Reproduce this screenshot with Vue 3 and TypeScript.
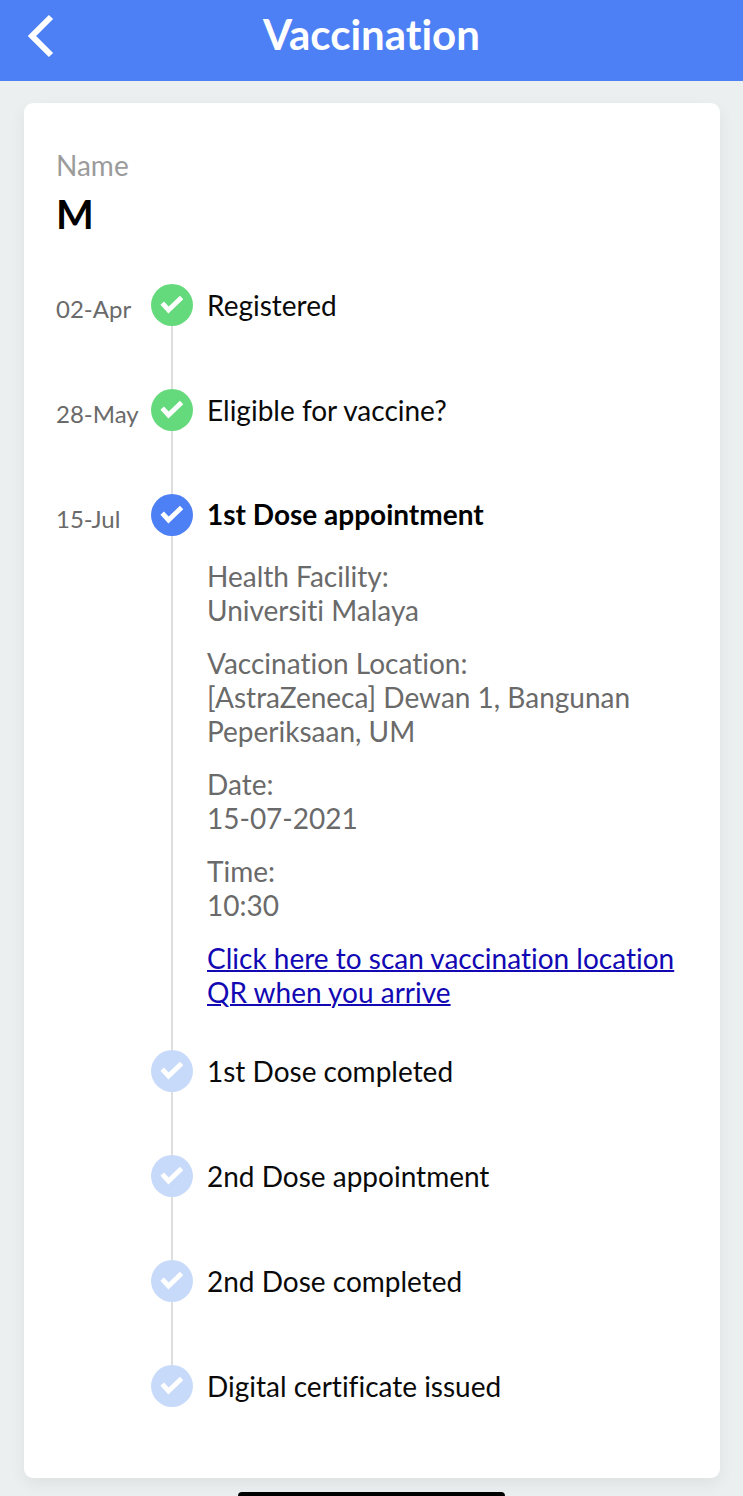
<script setup lang="ts">
type StepState = 'done' | 'current' | 'pending'

interface Detail {
  label: string
  value: string
}

interface Step {
  title: string
  state: StepState
  date?: string
  details?: Detail[]
  link?: string
}

const name = 'M'

const steps: Step[] = [
  { title: 'Registered', state: 'done', date: '02-Apr' },
  { title: 'Eligible for vaccine?', state: 'done', date: '28-May' },
  {
    title: '1st Dose appointment',
    state: 'current',
    date: '15-Jul',
    details: [
      { label: 'Health Facility:', value: 'Universiti Malaya' },
      { label: 'Vaccination Location:', value: '[AstraZeneca] Dewan 1, Bangunan Peperiksaan, UM' },
      { label: 'Date:', value: '15-07-2021' },
      { label: 'Time:', value: '10:30' },
    ],
    link: 'Click here to scan vaccination location QR when you arrive',
  },
  { title: '1st Dose completed', state: 'pending' },
  { title: '2nd Dose appointment', state: 'pending' },
  { title: '2nd Dose completed', state: 'pending' },
  { title: 'Digital certificate issued', state: 'pending' },
]
</script>

<template>
  <div class="page">
    <header class="header">
      <button class="back" type="button" aria-label="Back">
        <svg width="28" height="44" viewBox="0 0 28 44" aria-hidden="true">
          <path d="M23 3 L4 22 L23 41" fill="none" stroke="#fff" stroke-width="6" />
        </svg>
      </button>
      <h1 class="heading">Vaccination</h1>
    </header>

    <main class="card">
      <p class="name-label">Name</p>
      <p class="name">{{ name }}</p>

      <ol class="timeline">
        <li v-for="step in steps" :key="step.title" class="step" :class="step.state">
          <span class="date">{{ step.date }}</span>
          <span class="marker">
            <svg class="badge" width="42" height="42" viewBox="0 0 42 42" aria-hidden="true">
              <circle class="disc" cx="21" cy="21" r="21" />
              <path d="M11.2 19.2 L17.5 26 L30.6 13.6" fill="none" stroke="#fff" stroke-width="4.8" />
            </svg>
          </span>
          <div class="content">
            <h2 class="title">{{ step.title }}</h2>
            <div v-if="step.details" class="details">
              <p v-for="detail in step.details" :key="detail.label" class="detail">
                {{ detail.label }}<br />{{ detail.value }}
              </p>
              <p class="detail"><a class="link" href="#scan">{{ step.link }}</a></p>
            </div>
          </div>
        </li>
      </ol>
    </main>
    <div class="home-indicator"></div>
  </div>
</template>

<style>
body {
  margin: 0;
  background: #ebeff0;
}
</style>

<style scoped>
.page {
  min-height: 100vh;
  box-sizing: border-box;
  padding-bottom: 18px;
  background: #ebeff0;
  color: #0a0a0a;
  font-family: Lato, "Open Sans", "Liberation Sans", sans-serif;
  font-size: 28px;
  line-height: 34px;
  font-variant-ligatures: none;
}

.header {
  display: grid;
  grid-template-columns: 56px 1fr 56px;
  align-items: center;
  height: 81px;
  box-sizing: border-box;
  padding-bottom: 10px;
  background: #4e80f5;
  color: #fff;
}

.back {
  display: flex;
  justify-content: flex-end;
  padding: 0;
  border: 0;
  background: none;
  cursor: pointer;
}

.heading {
  margin: 0;
  padding-bottom: 4px;
  font-size: 42px;
  line-height: 52px;
  font-weight: 700;
  text-align: center;
}

.card {
  margin: 22px 23px 0 24px;
  padding: 45px 32px 8px;
  border-radius: 9px;
  background: #fff;
  box-shadow: 0 6px 16px rgba(0, 0, 0, 0.06);
}

.name-label,
.name {
  margin: 0;
}

.name-label {
  color: #9b9b9b;
}

.name {
  margin-top: 6px;
  color: #000;
  font-size: 40px;
  line-height: 52px;
  font-weight: 700;
}

.timeline {
  margin: 44px 0 0;
  padding: 0;
  list-style: none;
}

.step {
  display: grid;
  grid-template-columns: 95px 42px 1fr;
}

.date {
  padding-top: 8px;
  color: #6a6a6a;
  font-size: 24px;
}

.marker {
  display: flex;
  flex-direction: column;
  align-items: center;
}

.marker::after {
  content: "";
  flex: 1;
  width: 2px;
  background: #dedede;
}

.step:last-child .marker::after {
  background: none;
}

.badge {
  display: block;
}

.disc {
  fill: #c8dafa;
}

.done .disc {
  fill: #65da7c;
}

.current .disc {
  fill: #4e80f5;
}

.content {
  padding: 4px 0 67px 14px;
}

.title {
  margin: 0;
  font-size: 28px;
  line-height: 34px;
  font-weight: 400;
}

.current .title {
  color: #000;
  font-weight: 700;
}

.current .content {
  padding-top: 3px;
  padding-bottom: 41px;
}

.details {
  display: flex;
  flex-direction: column;
  gap: 19px;
  margin-top: 28px;
  color: #6a6a6a;
}

.detail {
  margin: 0;
}

.link {
  color: #1208b4;
  text-decoration-thickness: 2px;
}

.home-indicator {
  position: fixed;
  bottom: 0;
  left: 32%;
  right: 32%;
  height: 4px;
  border-radius: 4px 4px 0 0;
  background: #000;
}
</style>
